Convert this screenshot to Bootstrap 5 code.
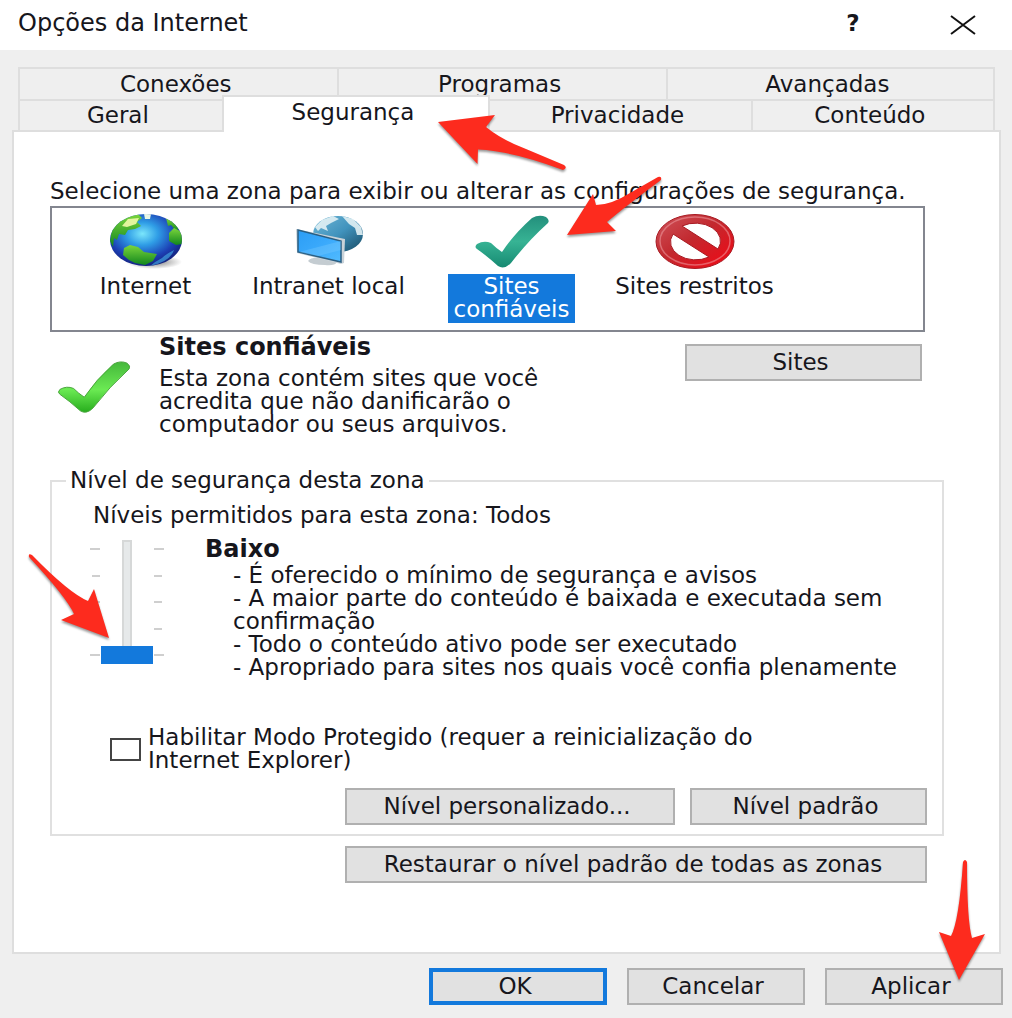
<!DOCTYPE html>
<html lang="pt-BR">
<head>
<meta charset="utf-8">
<meta name="viewport" content="width=device-width, initial-scale=1">
<title>Opções da Internet</title>
<link href="https://cdn.jsdelivr.net/npm/bootstrap@5.3.0/dist/css/bootstrap.min.css" rel="stylesheet">
<style>
  :root { --face: #efefef; --edge: #dedede; --accent: #1379dc; --ink: #16161c; }
  body { background: var(--face); color: var(--ink); font: 23px/23px "DejaVu Sans", Verdana, sans-serif; }
  .titlebar { height: 50px; padding: 0 34px 4px 18px; }
  .titlebar h1 { font-size: 24px; line-height: 28px; }
  .caption-btn { border: 0; background: none; padding: 0; width: 30px; line-height: 28px; color: var(--ink); }
  .caption-btns { gap: 80px; }
  .dialog-body { padding: 17px 11px 0 12px; }
  .tab-rows { padding: 0 6px; }
  .tab-line { display: flex; height: 32px; }
  .tab-line + .tab-line { height: 31px; }
  .dlg-tab { border: 2px solid var(--edge); border-width: 2px 0 0 2px; background: var(--face); padding: 0 6px 0 0; color: var(--ink); flex: 1 1 0; min-width: 0; }
  .dlg-tab:last-child { border-right-width: 2px; }
  .w-first { flex-grow: 320; } .w-mid { flex-grow: 329; } .w-last { flex-grow: 328; }
  .w-geral { flex-grow: 203; } .w-seg { flex-grow: 268; } .w-priv { flex-grow: 264; } .w-cont { flex-grow: 243; }
  .dlg-tab.active { background: #fff; border-right-width: 2px; margin: -4px 0 -2px; padding-bottom: 5px; position: relative; z-index: 1; }
  .w-priv { border-left-width: 0; }
  .tab-page { background: #fff; border: 2px solid var(--edge); padding: 48px 55px 67px 36px; min-height: 824px; }
  .zones { border: 2px solid #83868f; height: 126px; margin: 3px 19px 0 0; padding: 6px 2px; }
  .zone { width: 183px; border: 0; background: none; padding: 0; color: var(--ink); position: relative; }
  .zone svg.pic { display: block; margin: 0 auto 5px; }
  .zone .cap { display: inline-block; padding: 1px 5px 2px; }
  .zone.active .cap { background: var(--accent); color: #fff; }
  .push { background: #e1e1e1; border: 2px solid #b0b0b0; border-radius: 0; color: var(--ink); font-size: 23px; line-height: 23px; padding: 5px 8px 5px 2px; position: relative; white-space: nowrap; }
  .push:hover { background: #e5f1fb; border-color: var(--accent); }
  .push.primary { border: 4px solid var(--accent); padding: 3px 6px 3px 0; }
  .w-sm { width: 178px; } .w-md { width: 237px; } .w-lg { width: 330px; } .w-xl { width: 582px; }
  .zone-info { padding: 4px 22px 0 7px; gap: 28px; }
  .zone-info h2, .level h2 { font-size: 24px; line-height: 23px; font-weight: 700; margin: 0; }
  .group { border: 2px solid #e0e0e0; margin-top: 33px; padding: 12px 15px 9px 41px; position: relative; }
  .group legend { float: none; width: auto; font-size: 23px; line-height: 23px; margin: 0 0 0 -27px; padding: 0 4px; }
  .level { gap: 34px; margin-top: 11px; }
  .slider-box { width: 82px; height: 124px; margin: 2px 0 0 -4px; position: relative; }
  .ticks { padding: 8px 1px 8px; }
  .ticks i { display: block; width: 8px; height: 2px; background: #cfcfcf; }
  .ticks i:first-child, .ticks i:last-child { width: 10px; }
  .ticks.left { align-items: flex-end; }
  .vrange { -webkit-appearance: none; appearance: none; writing-mode: vertical-lr; direction: rtl; width: 52px; height: 124px; background: linear-gradient(#e6e9ea, #e6e9ea) center / 6px 120px no-repeat, linear-gradient(#d6d8d8, #d6d8d8) center / 10px 124px no-repeat; margin: 0; }
  .vrange::-webkit-slider-thumb { -webkit-appearance: none; width: 52px; height: 18px; background: var(--accent); border: 0; border-radius: 0; }
  .rules { margin: 3px 0 0 28px; white-space: nowrap; }
  .protect { gap: 7px; margin: 47px 0 16px 17px; }
  .protect input { -webkit-appearance: none; appearance: none; width: 31px; height: 23px; border: 2px solid #444; margin: 0; background: #fff; flex: none; }
  .protect input:checked { background: var(--accent); }
  .btn-line { gap: 15px; }
  .restore { margin: 10px 17px 0 0; }
  .foot { gap: 20px; padding: 14px 9px 13px; }
  .arrow { position: absolute; z-index: 5; pointer-events: none; fill: #fd2b1e; filter: drop-shadow(0 2px 1px rgba(0,0,0,.4)); overflow: visible; }
  .a-tab { right: -80px; top: 15px; }
  .a-zone { left: 146px; top: -39px; }
  .a-level { left: -62px; top: 13px; }
  .a-apply { right: 15px; bottom: 22px; }
</style>
</head>
<body>
<header class="titlebar bg-white d-flex align-items-center justify-content-between">
  <h1 class="m-0">Opções da Internet</h1>
  <div class="caption-btns d-flex align-items-center">
    <button class="caption-btn" type="button" aria-label="Ajuda"><b>?</b></button>
    <button class="caption-btn" type="button" aria-label="Fechar">
      <svg width="26" height="20" viewBox="0 0 26 20" fill="none" stroke="#111" stroke-width="2"><path d="M1 1L25 19M25 1L1 19"/></svg>
    </button>
  </div>
</header>

<main class="dialog-body">
  <div class="tab-rows" role="tablist">
    <div class="tab-line">
      <button class="dlg-tab w-first" type="button" role="tab">Conexões</button>
      <button class="dlg-tab w-mid" type="button" role="tab">Programas</button>
      <button class="dlg-tab w-last" type="button" role="tab">Avançadas</button>
    </div>
    <div class="tab-line">
      <button class="dlg-tab w-geral" type="button" role="tab">Geral</button>
      <button class="dlg-tab w-seg active" type="button" role="tab" aria-selected="true">Segurança
        <svg class="arrow a-tab" width="130" height="60" viewBox="438 112 130 60"><path d="M438 122L495 115L486 127Q502 140 526 149L564 165Q568 168 563 170Q512 151 478 149.500L477.500 164Z"/></svg>
      </button>
      <button class="dlg-tab w-priv" type="button" role="tab">Privacidade</button>
      <button class="dlg-tab w-cont" type="button" role="tab">Conteúdo</button>
    </div>
  </div>

  <section class="tab-page" role="tabpanel">
    <p class="m-0 text-nowrap">Selecione uma zona para exibir ou alterar as configurações de segurança.</p>

    <div class="zones d-flex align-items-start">
      <button class="zone" type="button">
        <svg class="pic" width="76" height="55" viewBox="0 0 76 55">
          <defs>
            <radialGradient id="sea" cx=".45" cy=".38" r=".62"><stop offset="0" stop-color="#7be6fb"/><stop offset=".35" stop-color="#2f9de6"/><stop offset=".75" stop-color="#1c3fb4"/><stop offset="1" stop-color="#15237f"/></radialGradient>
            <linearGradient id="land" x2="0" y2="1"><stop stop-color="#7bd63c"/><stop offset="1" stop-color="#11861e"/></linearGradient>
            <radialGradient id="shade"><stop stop-color="#444" stop-opacity=".7"/><stop offset="1" stop-color="#444" stop-opacity="0"/></radialGradient>
            <clipPath id="ball"><ellipse cx="38" cy="26" rx="36" ry="26"/></clipPath>
          </defs>
          <ellipse cx="46" cy="48" rx="28" ry="7" fill="url(#shade)"/>
          <ellipse cx="38" cy="26" rx="36" ry="26" fill="url(#sea)"/>
          <g clip-path="url(#ball)">
            <path fill="url(#land)" d="M2 27L4 14L16 3L30 0L34 4L29 8L33 12L27 15L20 16L17 21L11 20L9 26L6 24L5 33Z"/>
            <path fill="#e3f59d" d="M20 5L31 4L28 10L19 13L14 12Z"/>
            <path fill="#e8f6e4" d="M36 0H43L42 5L37 5Z"/>
            <path fill="url(#land)" d="M16 34L22 31L30 33L36 38L49 40L45 47L37 51L27 49L21 46L15 41Z"/>
            <path fill="url(#land)" d="M58 4L66 7L71 14L68 17L63 11L60 12Z"/>
            <path fill="url(#land)" d="M61 19L66 14L74 18V30L68 31L61 27Z"/>
            <path fill="#4bc0f4" opacity=".55" d="M42 52Q62 48 66 36Q58 40 54 44Q48 47 42 52Z"/>
          </g>
        </svg>
        <span class="cap">Internet</span>
      </button>
      <button class="zone" type="button">
        <svg class="pic" width="76" height="55" viewBox="0 0 76 55">
          <defs>
            <linearGradient id="steel" x2="1" y2="1"><stop stop-color="#6fb6d6"/><stop offset=".5" stop-color="#4193bd"/><stop offset="1" stop-color="#174a63"/></linearGradient>
            <linearGradient id="lcd" x2="1" y2="1"><stop stop-color="#2b9df5"/><stop offset=".5" stop-color="#3aa9fb"/><stop offset="1" stop-color="#52bcff"/></linearGradient>
          </defs>
          <ellipse cx="47" cy="20" rx="25" ry="18" fill="url(#steel)"/>
          <path fill="#e2f1f4" d="M24 13L31 6L42 2L48 5L40 9L35 12L37 17L30 14L27 17ZM51 2L62 5L70 13L72 21L66 21L64 14L58 10Z" opacity=".9"/>
          <path fill="#c4ccd1" d="M17 47Q20 43 29 44L30 40L38 42V46L46 48Q44 52 34 51Q20 51 17 47Z"/>
          <path fill="#c9d2d8" d="M5 15L54 25L53 49L50 50L6 39Z"/>
          <path fill="url(#lcd)" stroke="#2a5f83" stroke-width="1.500" d="M7 16L50 27V48L7 38Z"/>
          <path fill="#7bccff" opacity=".35" d="M50 27V36L27 42L8 38Z"/>
        </svg>
        <span class="cap text-nowrap">Intranet local</span>
      </button>
      <button class="zone active" type="button">
        <svg class="pic" width="76" height="55" viewBox="0 0 76 55">
          <defs><linearGradient id="teal" x2="0" y2="1"><stop stop-color="#238f7c"/><stop offset=".5" stop-color="#37b394"/><stop offset="1" stop-color="#168a72"/></linearGradient></defs>
          <path fill="url(#teal)" d="M3 35Q0 33 3 30Q10 26 17 29Q22 34 28 38Q40 20 58 4Q65 0 72 3Q76 6 74 9Q54 27 37 49Q30 56 24 52Q13 42 3 35Z"/>
        </svg>
        <span class="cap">Sites<br>confiáveis</span>
        <svg class="arrow a-zone" width="96" height="62" viewBox="566 176 96 62"><path d="M567 236L593 195L596 206Q611 206 630 194L658 178Q662 177 661 181Q626 207 607 223L616 232Z"/></svg>
      </button>
      <button class="zone" type="button">
        <svg class="pic" width="80" height="55" viewBox="0 0 80 55">
          <defs><linearGradient id="ban" x2="1" y2="1"><stop stop-color="#cf555c"/><stop offset=".45" stop-color="#c2292f"/><stop offset="1" stop-color="#f50512"/></linearGradient></defs>
          <path fill="url(#ban)" stroke="#a81a22" fill-rule="evenodd" d="M1 27.500A39 27 0 0 1 79 27.500A39 27 0 0 1 1 27.500ZM18 20A25 18 0 0 0 54 43ZM27 12L63 35A25 18 0 0 0 27 12Z"/>
          <ellipse cx="40" cy="27" rx="35" ry="24" fill="none" stroke="#ee9ba0" stroke-width="1.500" opacity=".55"/>
        </svg>
        <span class="cap text-nowrap">Sites restritos</span>
      </button>
    </div>

    <div class="zone-info d-flex align-items-start">
      <svg class="mt-4 flex-shrink-0" width="74" height="54" viewBox="0 0 76 55">
        <defs><linearGradient id="grn" x2="0" y2="1"><stop stop-color="#45b83b"/><stop offset=".55" stop-color="#6bea53"/><stop offset="1" stop-color="#27ad1d"/></linearGradient></defs>
        <path fill="url(#grn)" stroke="#48a33c" stroke-width="1" d="M3 35Q0 33 3 30Q10 26 17 29Q22 34 28 38Q40 20 58 4Q65 0 72 3Q76 6 74 9Q54 27 37 49Q30 56 24 52Q13 42 3 35Z"/>
      </svg>
      <div class="flex-grow-1">
        <h2>Sites confiáveis</h2>
        <p class="mb-0 mt-2">Esta zona contém sites que você<br>acredita que não danificarão o<br>computador ou seus arquivos.</p>
      </div>
      <button class="btn push w-md mt-2" type="button">Sites</button>
    </div>

    <fieldset class="group">
      <legend class="bg-white">Nível de segurança desta zona</legend>
      <p class="m-0">Níveis permitidos para esta zona: Todos</p>
      <div class="level d-flex align-items-start">
        <div class="slider-box d-flex flex-shrink-0">
          <div class="ticks left d-flex flex-column justify-content-between"><i></i><i></i><i></i><i></i><i></i></div>
          <input class="vrange" type="range" min="0" max="4" value="0" aria-label="Nível de segurança">
          <div class="ticks d-flex flex-column justify-content-between"><i></i><i></i><i></i><i></i><i></i></div>
          <svg class="arrow a-level" width="84" height="86" viewBox="26 555 84 86"><path d="M28 559Q27 555 31 557Q68 595 87 603L93 591L108 640L60 622L73 616Q66 600 28 559Z"/></svg>
        </div>
        <div>
          <h2>Baixo</h2>
          <div class="rules">- É oferecido o mínimo de segurança e avisos<br>- A maior parte do conteúdo é baixada e executada sem<br>confirmação<br>- Todo o conteúdo ativo pode ser executado<br>- Apropriado para sites nos quais você confia plenamente</div>
        </div>
      </div>
      <div class="protect d-flex align-items-center">
        <input type="checkbox" id="protegido">
        <label for="protegido">Habilitar Modo Protegido (requer a reinicialização do<br>Internet Explorer)</label>
      </div>
      <div class="btn-line d-flex justify-content-end">
        <button class="btn push w-lg" type="button">Nível personalizado...</button>
        <button class="btn push w-md" type="button">Nível padrão</button>
      </div>
    </fieldset>
    <div class="restore d-flex justify-content-end">
      <button class="btn push w-xl" type="button">Restaurar o nível padrão de todas as zonas</button>
    </div>
  </section>
</main>

<footer class="foot d-flex justify-content-end">
  <button class="btn push primary w-sm" type="button">OK</button>
  <button class="btn push w-sm" type="button">Cancelar</button>
  <button class="btn push w-sm" type="button">Aplicar
    <svg class="arrow a-apply" width="48" height="122" viewBox="938 858 48 122"><path d="M963 861Q965 857 967 861Q967 920 972 937L985 933L959 979L939 931L951 935Q959 920 963 861Z"/></svg>
  </button>
</footer>
<script src="https://cdn.jsdelivr.net/npm/bootstrap@5.3.0/dist/js/bootstrap.bundle.min.js"></script>
</body>
</html>
